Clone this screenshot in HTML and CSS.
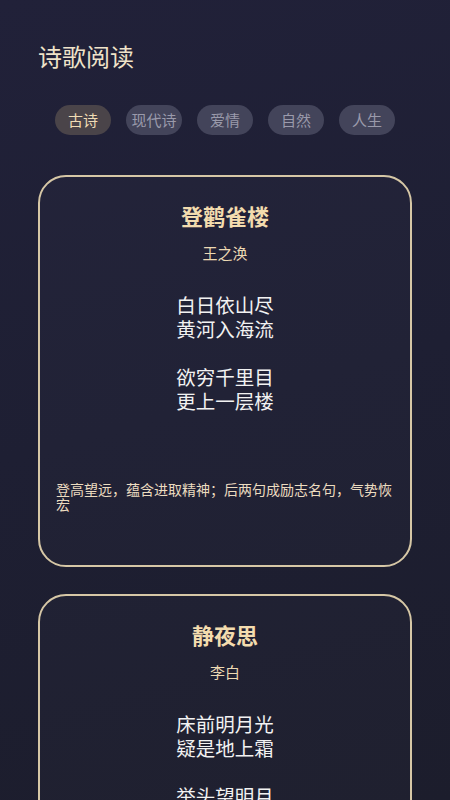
FILE: index.html
```html
<!DOCTYPE html>
<html lang="zh-CN">

<head>
    <meta charset="UTF-8">
    <meta name="viewport" content="width=device-width, initial-scale=1.0">
    <title>诗歌阅读</title>
    <link rel="stylesheet" href="styles.css">
</head>

<body>
    <div class="page">
        <h1 class="page_title">诗歌阅读</h1>

        <ul class="tabs">
            <li class="current">古诗</li>
            <li>现代诗</li>
            <li>爱情</li>
            <li>自然</li>
            <li>人生</li>
        </ul>

        <div class="poem_list">
            <div class="card">
                <h2 class="card_title">登鹳雀楼</h2>
                <div class="author">王之涣</div>
                <div class="lines">白日依山尽
黄河入海流

欲穷千里目
更上一层楼</div>
                <p class="note">登高望远，蕴含进取精神；后两句成励志名句，气势恢宏</p>
            </div>

            <div class="card">
                <h2 class="card_title">静夜思</h2>
                <div class="author">李白</div>
                <div class="lines">床前明月光
疑是地上霜

举头望明月
低头思故乡</div>
                <p class="note">思乡名篇，语言浅白却意味深长</p>
            </div>
        </div>
    </div>
</body>

</html>
```

FILE: styles.css
```css
* {
    margin: 0;
    padding: 0;
    box-sizing: border-box;
}

li {
    list-style: none;
}

html,
body {
    height: 100%;
}

body {
    background: linear-gradient(165deg, #212139 0%, #1e1f33 50%, #1c1d2c 100%);
    font-family: "Noto Sans CJK SC", "Noto Sans", sans-serif;
    overflow: hidden;
}

.page {
    padding: 40px 38px 0;
}

.page_title {
    font-size: 24px;
    line-height: 32px;
    font-weight: 400;
    color: #efe3c9;
}

.tabs {
    display: flex;
    justify-content: center;
    gap: 15px;
    margin: 33px -38px 0;
}

.tabs li {
    width: 56px;
    height: 30px;
    line-height: 30px;
    border-radius: 15px;
    background-color: #43445a;
    color: #9a9aab;
    font-size: 15px;
    text-align: center;
    white-space: nowrap;
}

.tabs .current {
    background-color: #4a4449;
    color: #f0dcb5;
}

.poem_list {
    margin-top: 40px;
    display: flex;
    flex-direction: column;
    gap: 27px;
}

.card {
    border: 2px solid #d6c7a6;
    border-radius: 28px;
    background-color: rgba(255, 255, 255, 0.015);
    padding: 23px 16px 53px;
    text-align: center;
}

.card_title {
    font-size: 22px;
    line-height: 30px;
    font-weight: 700;
    color: #f3dcae;
}

.author {
    margin-top: 12px;
    font-size: 15px;
    line-height: 22px;
    color: #ecd9b3;
}

.lines {
    margin-top: 29px;
    font-size: 19.5px;
    line-height: 24px;
    color: #f2f2f2;
    white-space: pre-line;
}

.note {
    margin-top: 69px;
    font-size: 14px;
    line-height: 15px;
    color: #ecdcc0;
    text-align: left;
}
```
